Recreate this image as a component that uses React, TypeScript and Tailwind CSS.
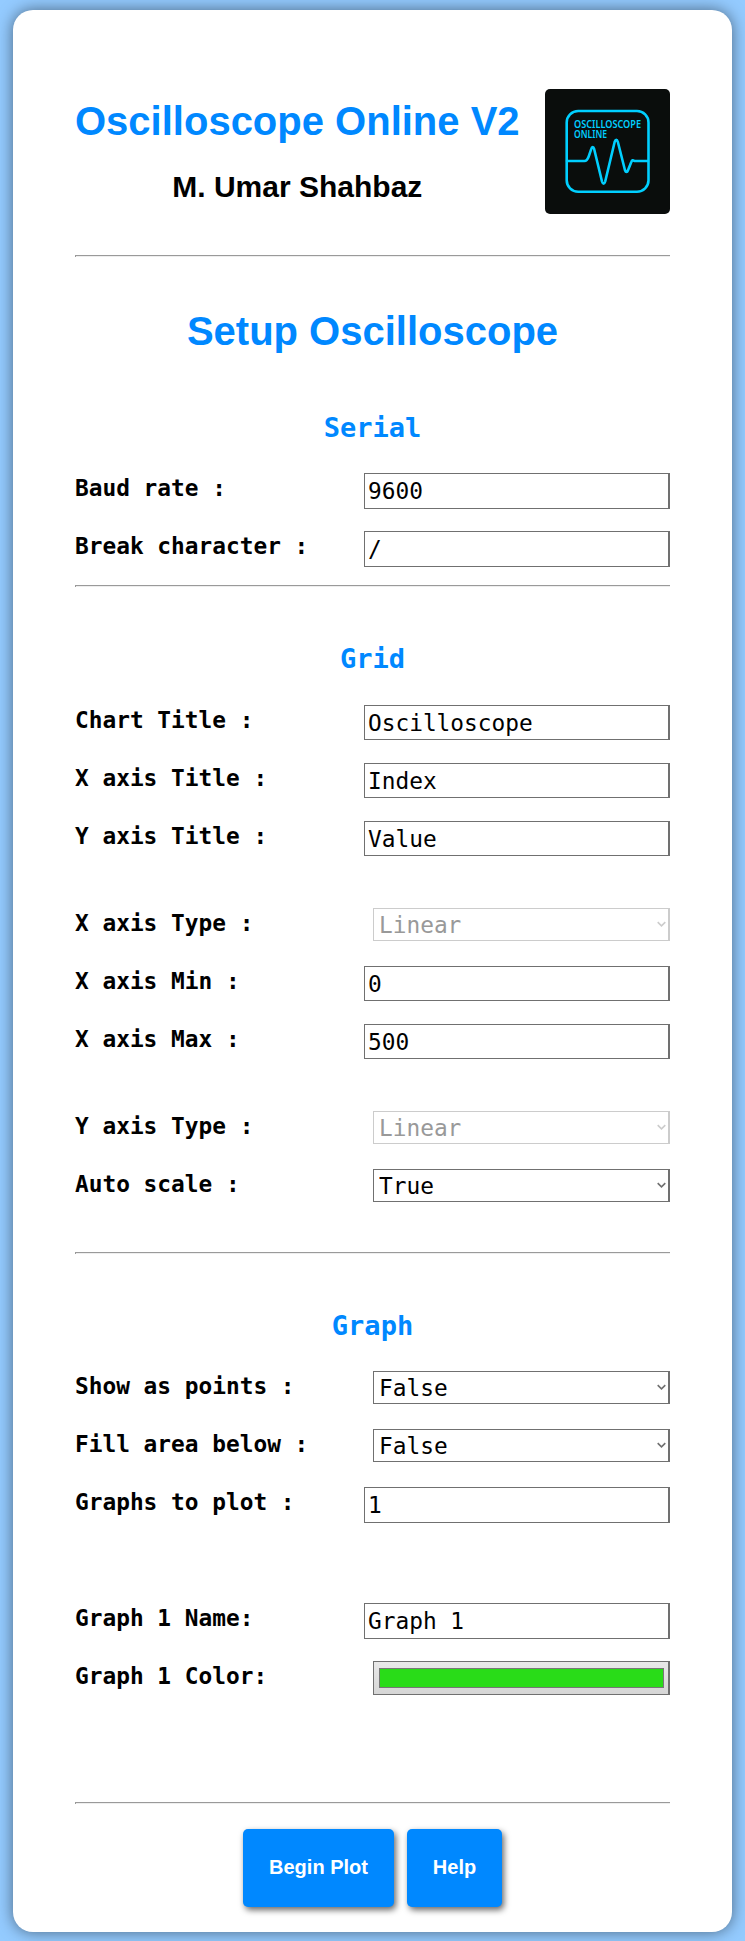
import React from "react";

const mono = "font-['DejaVu_Sans_Mono',monospace]";

function Rule({ className = "" }: { className?: string }) {
  return <div className={`h-[2px] border-t border-l border-t-[#9a9a9a] border-l-[#9a9a9a] bg-[#eeeeee] ${className}`} />;
}

function Heading({ children }: { children: React.ReactNode }) {
  return (
    <h2 className="h-[36px] text-center text-[27px] leading-[36px] font-bold text-[#0088ff] font-['DejaVu_Sans_Mono',monospace]">
      {children}
    </h2>
  );
}

function Row({ label, children }: { label: string; children: React.ReactNode }) {
  return (
    <div className="flex h-[58px] items-start justify-between">
      <label className={`mt-px whitespace-pre text-[22.8px] leading-[29px] font-bold text-black ${mono}`}>
        {label}
      </label>
      {children}
    </div>
  );
}

function TextField({ label, value, tall = false }: { label: string; value: string; tall?: boolean }) {
  return (
    <Row label={label}>
      <input
        defaultValue={value}
        className={`w-[306px] border border-r-2 border-[#707070] bg-white pt-0 pr-0 pl-[3px] text-[22.8px] leading-[29px] text-black outline-none font-['DejaVu_Sans_Mono',monospace] ${tall ? "h-[36px] pb-0" : "h-[35px] pb-0"}`}
      />
    </Row>
  );
}

function SelectField({ label, options, disabled = false }: { label: string; options: string[]; disabled?: boolean }) {
  return (
    <Row label={label}>
      <div className="relative h-[33px] w-[297px]">
        <select
          disabled={disabled}
          className={`h-[33px] w-[297px] appearance-none border border-r-2 bg-white pt-0 pl-[5px] text-[22.8px] leading-[28px] opacity-100 outline-none font-['DejaVu_Sans_Mono',monospace] ${disabled ? "border-[#cccccc] text-[#999999]" : "border-[#707070] text-black"}`}
        >
          {options.map((o) => (
            <option key={o}>{o}</option>
          ))}
        </select>
        <svg
          className={`pointer-events-none absolute top-[13px] right-[4px] ${disabled ? "text-[#cccccc]" : "text-[#707070]"}`}
          width="9"
          height="7"
          viewBox="0 0 9 7"
          fill="none"
          stroke="currentColor"
          strokeWidth="1.6"
        >
          <path d="M0.7 1.2 L4.5 4.8 L8.3 1.2" />
        </svg>
      </div>
    </Row>
  );
}

function Logo() {
  return (
    <svg className="block shrink-0" width="125" height="125" viewBox="0 0 125 125">
      <rect width="125" height="125" rx="5" fill="#0a0d0c" />
      <g fill="none" stroke="#00cfff" strokeWidth="2.6" strokeLinecap="round" strokeLinejoin="round">
        <rect x="21.7" y="22" width="81.8" height="80.7" rx="11.5" />
        <path d="M22 72H39.5C42 72 42.8 70 43.7 67.5L46.2 60.2C47 57.3 48.4 57.3 49.2 60.2L57 92.5C57.8 95.3 59.4 95.3 60.2 92.5L69.7 52.8C70.6 50.2 72 50.2 72.8 52.8L80 81.2C80.8 83.4 82.2 83.4 83 81.2L86.3 73C87 71 88 71 89.5 72H103" />
      </g>
      <g fill="#00cfff" className="font-['Noto_Sans',sans-serif] font-semibold" fontSize="10">
        <text x="29" y="38.6" textLength="67" lengthAdjust="spacingAndGlyphs">OSCILLOSCOPE</text>
        <text x="29" y="49" textLength="33" lengthAdjust="spacingAndGlyphs">ONLINE</text>
      </g>
    </svg>
  );
}

export default function App() {
  return (
    <div className="h-[1941px] w-[745px] overflow-hidden bg-[#94cbff] pt-[10px] pl-[13px] font-['Liberation_Sans',Arial,sans-serif]">
      <main className="h-[1922px] w-[719px] rounded-[20px] bg-white pt-[79px] pr-[62px] pl-[62px] shadow-[0_0_16px_rgba(0,0,0,0.5)]">
        <header className="flex h-[166px] items-start justify-between">
          <div className="flex flex-col items-center">
            <h1 className="mt-[9px] text-[40px] leading-[46px] font-bold whitespace-nowrap text-[#0088ff]">Oscilloscope Online V2</h1>
            <p className="mt-[26px] text-[30px] leading-[34px] font-bold text-black">M. Umar Shahbaz</p>
          </div>
          <Logo />
        </header>
        <Rule />
        <h1 className="mt-[51px] h-[46px] text-center text-[40px] leading-[46px] font-bold text-[#0088ff]">Setup Oscilloscope</h1>

        <section className="mt-[56px] h-[175px]">
          <Heading>Serial</Heading>
          <div className="pt-[27px]">
            <TextField label="Baud rate :" value="9600" tall />
            <TextField label="Break character :" value="/" tall />
          </div>
        </section>
        <Rule />

        <section className="mt-[54px] h-[611px]">
          <Heading>Grid</Heading>
          <div className="pt-[28px]">
            <TextField label="Chart Title :" value="Oscilloscope" />
            <TextField label="X axis Title :" value="Index" />
            <TextField label="Y axis Title :" value="Value" />
          </div>
          <div className="pt-[29px]">
            <SelectField label="X axis Type :" options={["Linear"]} disabled />
            <TextField label="X axis Min :" value="0" />
            <TextField label="X axis Max :" value="500" />
          </div>
          <div className="pt-[29px]">
            <SelectField label="Y axis Type :" options={["Linear"]} disabled />
            <SelectField label="Auto scale :" options={["True", "False"]} />
          </div>
        </section>
        <Rule />

        <section className="mt-[54px] h-[494px]">
          <Heading>Graph</Heading>
          <div className="pt-[27px]">
            <SelectField label="Show as points :" options={["False", "True"]} />
            <SelectField label="Fill area below :" options={["False", "True"]} />
            <TextField label="Graphs to plot :" value="1" tall />
          </div>
          <div className="pt-[58px]">
            <TextField label="Graph 1 Name:" value="Graph 1" tall />
            <Row label="Graph 1 Color:">
              <div className="h-[34px] w-[297px] border border-r-2 border-[#707070] bg-linear-to-b from-[#e9e9e9] to-[#d6d6d6] py-[6px] pr-[4px] pl-[5px]">
                <div className="h-[20px] border border-[#777777] bg-[#29dc18]" />
              </div>
            </Row>
          </div>
        </section>
        <Rule />

        <footer className="mt-[25px] flex justify-center gap-[13px]">
          <button className="h-[78px] w-[151px] rounded-[5px] bg-[#0088ff] pb-[3px] text-[20px] font-bold text-white shadow-[2px_3px_6px_rgba(0,0,0,0.6)]">
            Begin Plot
          </button>
          <button className="h-[78px] w-[95px] rounded-[5px] bg-[#0088ff] pb-[3px] text-[20px] font-bold text-white shadow-[2px_3px_6px_rgba(0,0,0,0.6)]">
            Help
          </button>
        </footer>
      </main>
    </div>
  );
}
